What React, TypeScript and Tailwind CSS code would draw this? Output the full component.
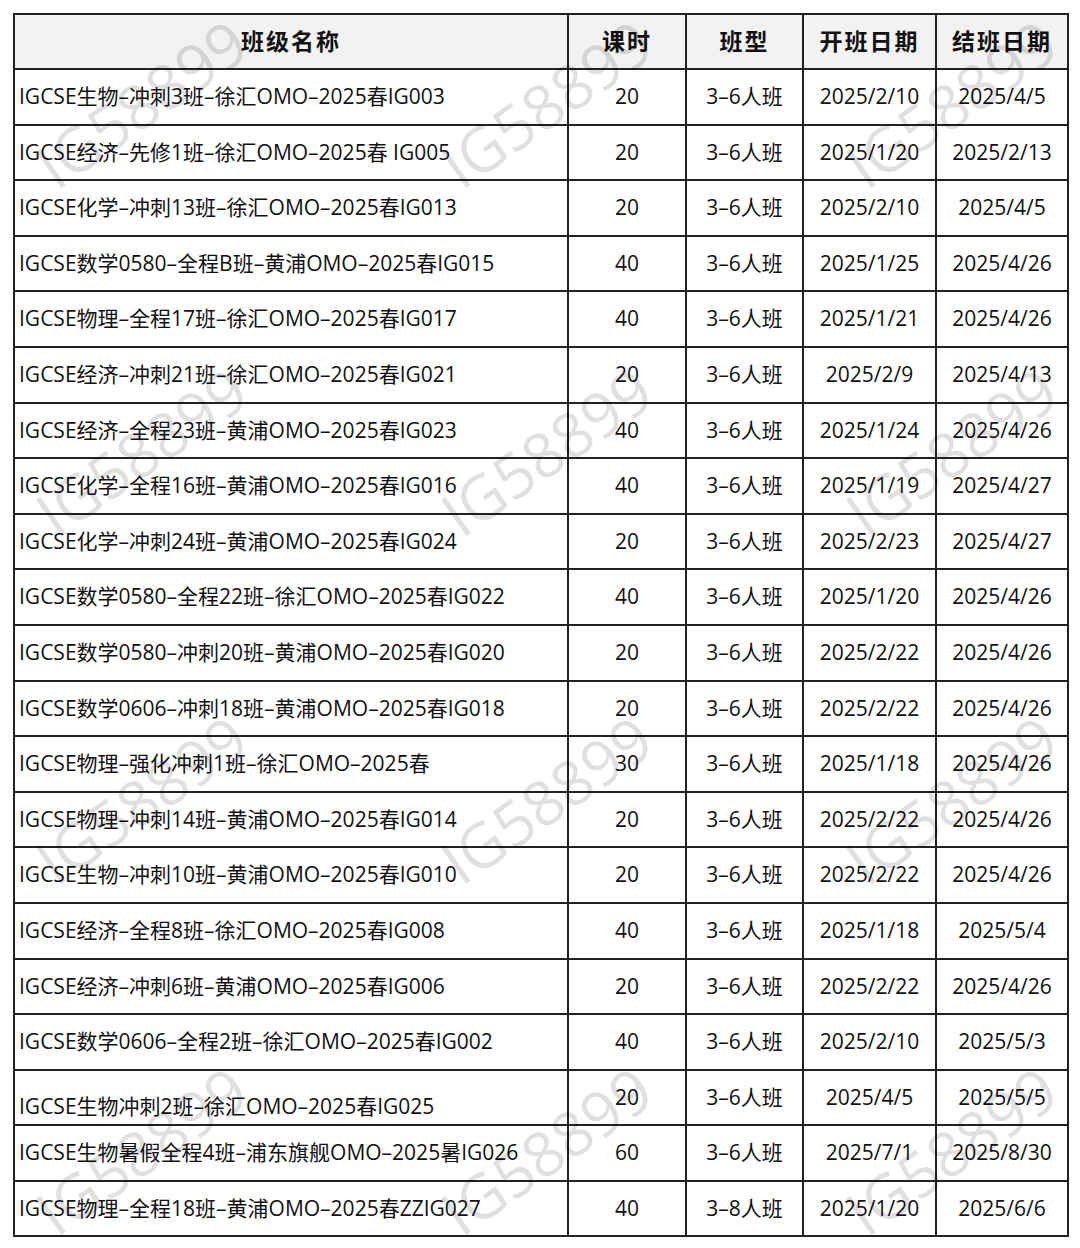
import React from 'react';

type Row = { name: string; hours: string; type: string; start: string; end: string; bottom?: boolean };

const rows: Row[] = [
  { name: 'IGCSE生物–冲刺3班–徐汇OMO–2025春IG003', hours: '20', type: '3–6人班', start: '2025/2/10', end: '2025/4/5' },
  { name: 'IGCSE经济–先修1班–徐汇OMO–2025春 IG005', hours: '20', type: '3–6人班', start: '2025/1/20', end: '2025/2/13' },
  { name: 'IGCSE化学–冲刺13班–徐汇OMO–2025春IG013', hours: '20', type: '3–6人班', start: '2025/2/10', end: '2025/4/5' },
  { name: 'IGCSE数学0580–全程B班–黄浦OMO–2025春IG015', hours: '40', type: '3–6人班', start: '2025/1/25', end: '2025/4/26' },
  { name: 'IGCSE物理–全程17班–徐汇OMO–2025春IG017', hours: '40', type: '3–6人班', start: '2025/1/21', end: '2025/4/26' },
  { name: 'IGCSE经济–冲刺21班–徐汇OMO–2025春IG021', hours: '20', type: '3–6人班', start: '2025/2/9', end: '2025/4/13' },
  { name: 'IGCSE经济–全程23班–黄浦OMO–2025春IG023', hours: '40', type: '3–6人班', start: '2025/1/24', end: '2025/4/26' },
  { name: 'IGCSE化学–全程16班–黄浦OMO–2025春IG016', hours: '40', type: '3–6人班', start: '2025/1/19', end: '2025/4/27' },
  { name: 'IGCSE化学–冲刺24班–黄浦OMO–2025春IG024', hours: '20', type: '3–6人班', start: '2025/2/23', end: '2025/4/27' },
  { name: 'IGCSE数学0580–全程22班–徐汇OMO–2025春IG022', hours: '40', type: '3–6人班', start: '2025/1/20', end: '2025/4/26' },
  { name: 'IGCSE数学0580–冲刺20班–黄浦OMO–2025春IG020', hours: '20', type: '3–6人班', start: '2025/2/22', end: '2025/4/26' },
  { name: 'IGCSE数学0606–冲刺18班–黄浦OMO–2025春IG018', hours: '20', type: '3–6人班', start: '2025/2/22', end: '2025/4/26' },
  { name: 'IGCSE物理–强化冲刺1班–徐汇OMO–2025春', hours: '30', type: '3–6人班', start: '2025/1/18', end: '2025/4/26' },
  { name: 'IGCSE物理–冲刺14班–黄浦OMO–2025春IG014', hours: '20', type: '3–6人班', start: '2025/2/22', end: '2025/4/26' },
  { name: 'IGCSE生物–冲刺10班–黄浦OMO–2025春IG010', hours: '20', type: '3–6人班', start: '2025/2/22', end: '2025/4/26' },
  { name: 'IGCSE经济–全程8班–徐汇OMO–2025春IG008', hours: '40', type: '3–6人班', start: '2025/1/18', end: '2025/5/4' },
  { name: 'IGCSE经济–冲刺6班–黄浦OMO–2025春IG006', hours: '20', type: '3–6人班', start: '2025/2/22', end: '2025/4/26' },
  { name: 'IGCSE数学0606–全程2班–徐汇OMO–2025春IG002', hours: '40', type: '3–6人班', start: '2025/2/10', end: '2025/5/3' },
  { name: 'IGCSE生物冲刺2班–徐汇OMO–2025春IG025', hours: '20', type: '3–6人班', start: '2025/4/5', end: '2025/5/5', bottom: true },
  { name: 'IGCSE生物暑假全程4班–浦东旗舰OMO–2025暑IG026', hours: '60', type: '3–6人班', start: '2025/7/1', end: '2025/8/30' },
  { name: 'IGCSE物理–全程18班–黄浦OMO–2025春ZZIG027', hours: '40', type: '3–8人班', start: '2025/1/20', end: '2025/6/6' },
];

const headers = ['班级名称', '课时', '班型', '开班日期', '结班日期'];

export default function App() {
  return (
    <div
      className="relative h-[1248px] w-[1080px] overflow-hidden bg-white text-[#111]"
      style={{ fontFamily: '"Open Sans", "Noto Sans CJK SC", sans-serif' }}
    >
      <div className="pl-[13px] pt-[13px]">
        <table className="w-[1054px] table-fixed border-collapse border-2 border-[#222]">
          <colgroup>
            <col className="w-[554px]" />
            <col className="w-[118px]" />
            <col className="w-[117px]" />
            <col className="w-[133px]" />
            <col className="w-[132px]" />
          </colgroup>
          <thead>
            <tr className="h-[55px] bg-[#f2f2f2]">
              {headers.map((h) => (
                <th
                  key={h}
                  className="border-2 border-[#222] p-0 pb-[3px] text-center text-[23px] font-bold tracking-[2px]"
                  style={{ fontFamily: '"Noto Sans CJK SC", sans-serif' }}
                >
                  {h}
                </th>
              ))}
            </tr>
          </thead>
          <tbody>
            {rows.map((r) => (
              <tr key={r.name} className="h-[55.6px] text-[21px]">
                <td
                  className={
                    r.bottom
                      ? 'border-2 border-[#222] pb-[2px] pl-[4px] align-bottom whitespace-nowrap'
                      : 'border-2 border-[#222] pl-[4px] align-middle whitespace-nowrap'
                  }
                >
                  {r.name}
                </td>
                <td className="border-2 border-[#222] text-center">{r.hours}</td>
                <td className="border-2 border-[#222] text-center">{r.type}</td>
                <td className="border-2 border-[#222] text-center">{r.start}</td>
                <td className="border-2 border-[#222] text-center">{r.end}</td>
              </tr>
            ))}
          </tbody>
        </table>
      </div>

      {/* watermark */}
      <div className="pointer-events-none absolute left-[-62px] top-[-71px] grid grid-cols-[repeat(3,405px)] grid-rows-[repeat(3,348px)_300px]">
        {Array.from({ length: 12 }).map((_, i) => (
          <div key={i} className={i >= 9 ? 'flex items-start justify-center pt-[146px]' : 'flex items-center justify-center'}>
            <span
              className="-rotate-[35deg] text-[62px] font-normal leading-none text-black/[0.12]"
              style={{ fontFamily: '"Open Sans", sans-serif' }}
            >
              IG58899
            </span>
          </div>
        ))}
      </div>
    </div>
  );
}
